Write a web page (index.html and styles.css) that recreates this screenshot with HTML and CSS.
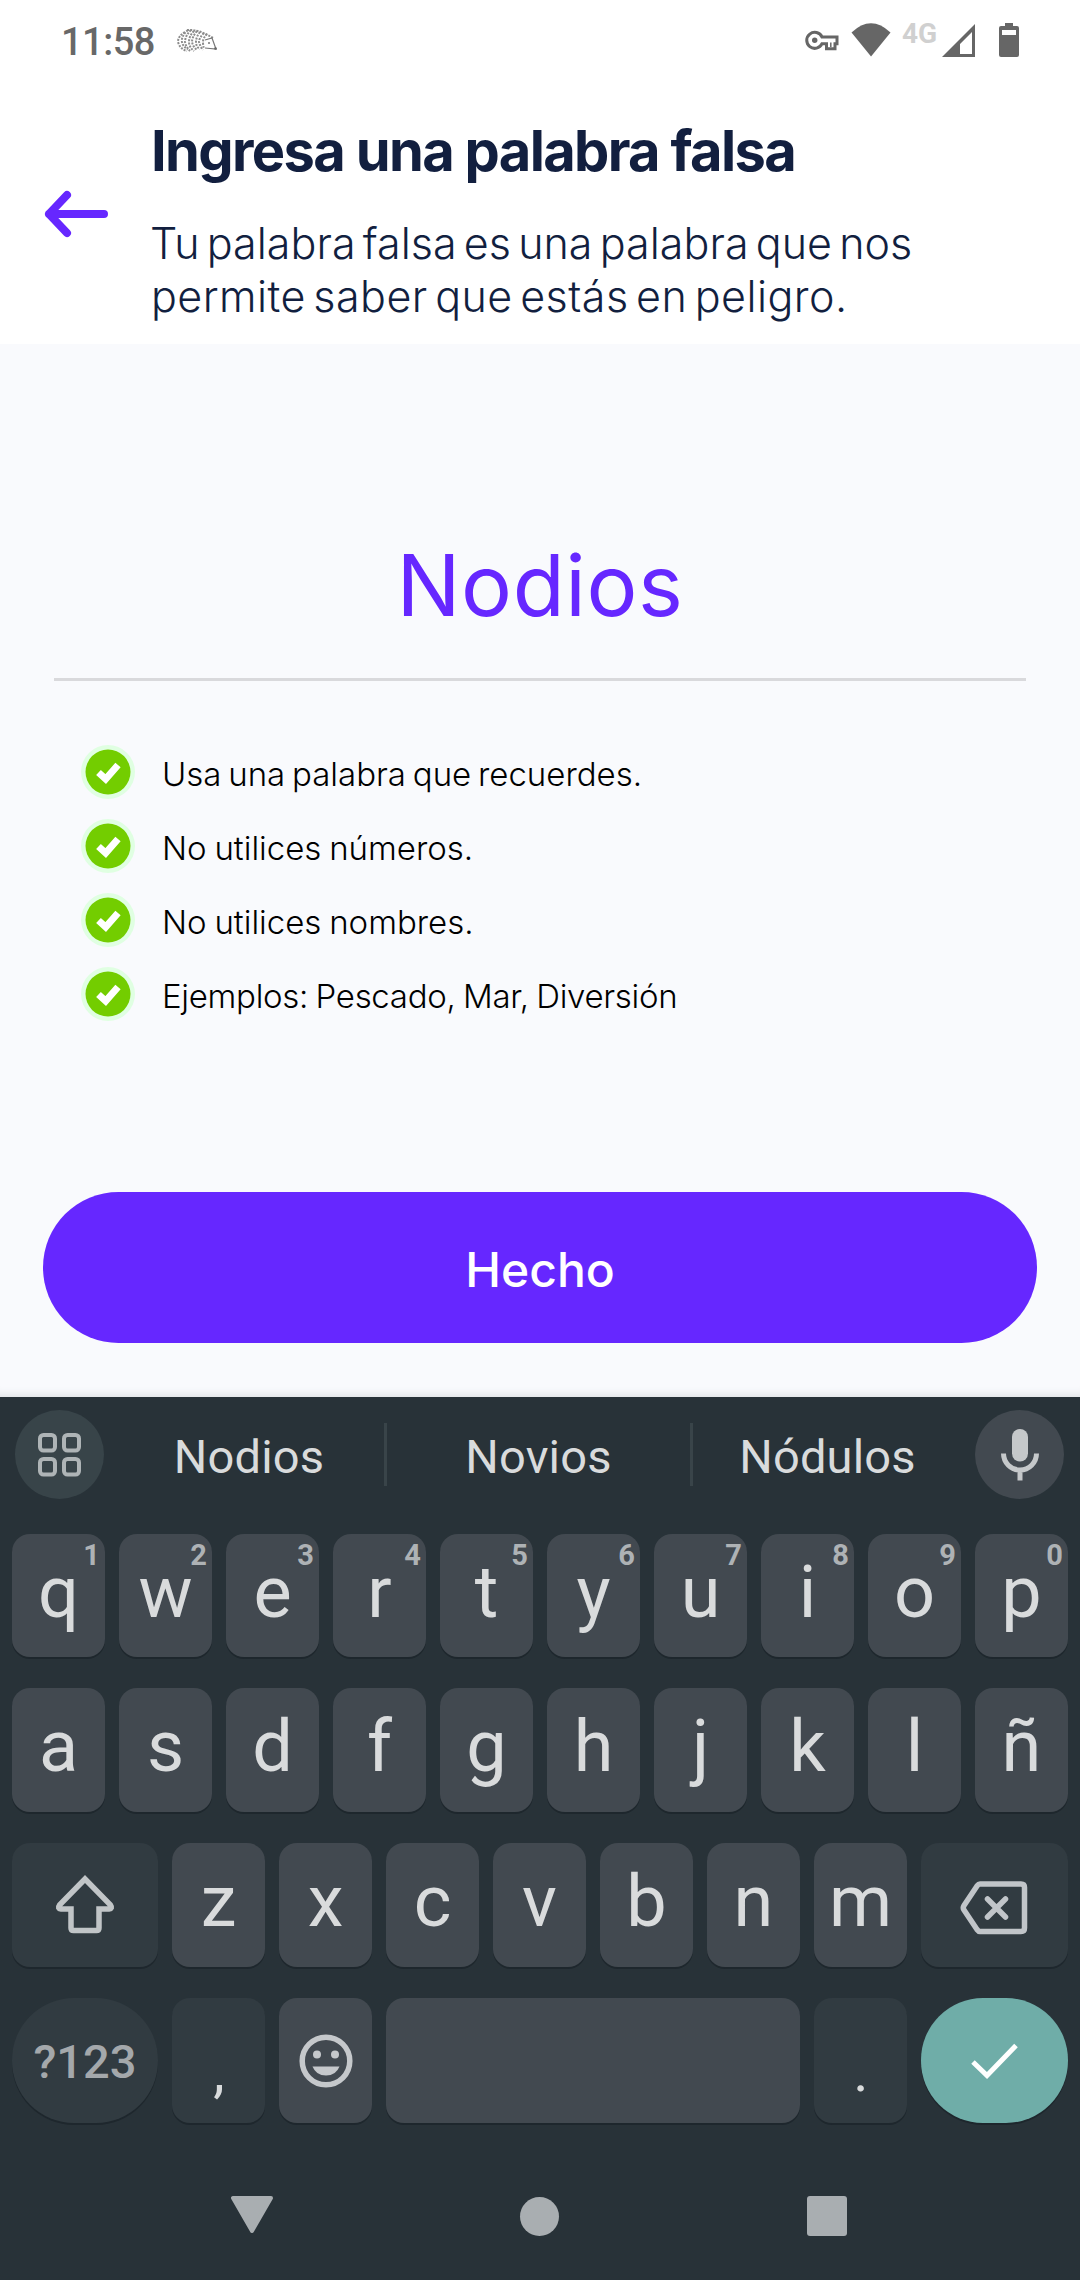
FILE: index.html
```html
<!DOCTYPE html>
<html lang="es">
<head>
<meta charset="utf-8">
<title>Ingresa una palabra falsa</title>
<link rel="stylesheet" href="styles.css">
</head>
<body>
<div class="screen">
  <div class="status">
    <span class="time">11:58</span>
    <svg class="hedgehog" width="40" height="24" viewBox="0 0 40 24">
      <g fill="none" stroke="#8c8c8c" stroke-width="2" stroke-dasharray="2 1.2">
        <path d="M8 3Q1 7 1 13Q3 20 10 22"/><path d="M11 1Q4 7 5 13Q6 18 11 20"/>
        <path d="M14 1Q8 7 8 13Q9 18 13 22"/><path d="M17 2Q12 7 12 13Q12 18 17 22"/>
        <path d="M20 2Q15 8 15 13Q16 18 20 21"/><path d="M23 3Q19 8 19 13Q19 18 23 20"/>
        <path d="M27 4Q22 9 22 13Q23 17 26 21"/><path d="M30 5Q26 9 26 13Q26 17 27 19"/>
        <path d="M10 1Q22 0 36 9"/>
      </g>
      <path d="M28 11L35 9L39 20L28 19" fill="none" stroke="#777" stroke-width="1.2"/>
      <circle cx="32" cy="14" r="1" fill="#777"/><circle cx="38.500" cy="19.500" r="1.300" fill="#666"/>
    </svg>
    <span class="spacer"></span>
    <svg class="key-icon" width="34" height="22" viewBox="0 0 34 22">
      <path d="M17 7H32V13.700H30V18.700H21.500V13.700H17A8 8 0 1 1 17 7Z" fill="none" stroke="#666" stroke-width="3"/>
      <path d="M25.800 12.500V17" stroke="#666" stroke-width="1.500"/>
      <circle cx="9.700" cy="10.300" r="2.700" fill="#666"/>
    </svg>
    <svg class="wifi" width="40" height="34" viewBox="0 0 40 34"><path d="M0.500 9.500Q20 -9 39.500 9.500L20 33.500Z" fill="#666"/></svg>
    <span class="net">4G</span>
    <svg class="signal" width="33" height="34" viewBox="0 0 33 34"><path fill="#666" fill-rule="evenodd" d="M33 0V33H0ZM30 8L18 20V30H30Z"/></svg>
    <svg class="battery" width="20" height="34" viewBox="0 0 20 34"><path fill="#666" fill-rule="evenodd" d="M6 0H14V3H18Q20 3 20 5V32Q20 34 18 34H2Q0 34 0 32V5Q0 3 2 3H6ZM3 7V12H17V7Z"/></svg>
  </div>

  <header class="header">
    <svg class="back" width="64" height="48" viewBox="0 0 64 48"><path d="M23 5L5 24L23 43M5 24H60" fill="none" stroke="#6627ff" stroke-width="8" stroke-linecap="round" stroke-linejoin="round"/></svg>
    <div class="heading">
      <h1>Ingresa una palabra falsa</h1>
      <p><span class="line-a">Tu palabra falsa es una palabra que nos</span><br><span class="line-b">permite saber que estás en peligro.</span></p>
    </div>
  </header>

  <main class="content">
    <div class="word">Nodios</div>
    <ul class="tips">
      <li><svg class="check" viewBox="0 0 54 54"><circle cx="27" cy="27" r="27" fill="#e0ffe2"/><circle cx="27" cy="27" r="22.500" fill="#73cd00"/><path d="M17.500 27.500L24.700 34L37 20" fill="none" stroke="#fff" stroke-width="7"/></svg><span class="t1">Usa una palabra que recuerdes.</span></li>
      <li><svg class="check" viewBox="0 0 54 54"><circle cx="27" cy="27" r="27" fill="#e0ffe2"/><circle cx="27" cy="27" r="22.500" fill="#73cd00"/><path d="M17.500 27.500L24.700 34L37 20" fill="none" stroke="#fff" stroke-width="7"/></svg><span class="t2">No utilices números.</span></li>
      <li><svg class="check" viewBox="0 0 54 54"><circle cx="27" cy="27" r="27" fill="#e0ffe2"/><circle cx="27" cy="27" r="22.500" fill="#73cd00"/><path d="M17.500 27.500L24.700 34L37 20" fill="none" stroke="#fff" stroke-width="7"/></svg><span class="t3">No utilices nombres.</span></li>
      <li><svg class="check" viewBox="0 0 54 54"><circle cx="27" cy="27" r="27" fill="#e0ffe2"/><circle cx="27" cy="27" r="22.500" fill="#73cd00"/><path d="M17.500 27.500L24.700 34L37 20" fill="none" stroke="#fff" stroke-width="7"/></svg><span class="t4">Ejemplos: Pescado, Mar, Diversión</span></li>
    </ul>
    <button class="done">Hecho</button>
  </main>

  <div class="keyboard">
    <div class="strip">
      <span class="round apps"><svg width="44" height="44" viewBox="0 0 44 44"><g fill="none" stroke="#aeb4b6" stroke-width="4"><rect x="2" y="2" width="15" height="15.500" rx="3.500"/><rect x="26" y="2" width="15" height="15.500" rx="3.500"/><rect x="2" y="26" width="15" height="15.500" rx="3.500"/><rect x="26" y="26" width="15" height="15.500" rx="3.500"/></g></svg></span>
      <span class="sug s1">Nodios</span><i class="bar"></i><span class="sug s2">Novios</span><i class="bar"></i><span class="sug s3">Nódulos</span>
      <span class="round mic"><svg width="38" height="52" viewBox="0 0 38 52"><rect x="11" y="0" width="16" height="32.500" rx="8" fill="#c5c8ca"/><path d="M2.500 24.500A16.500 16.500 0 0 0 35.500 24.500M19 41V51.500" fill="none" stroke="#c5c8ca" stroke-width="5"/></svg></span>
    </div>
    <div class="row r1">
      <span class="key">q<sup>1</sup></span><span class="key">w<sup>2</sup></span><span class="key">e<sup>3</sup></span><span class="key">r<sup>4</sup></span><span class="key">t<sup>5</sup></span><span class="key">y<sup>6</sup></span><span class="key">u<sup>7</sup></span><span class="key">i<sup>8</sup></span><span class="key">o<sup>9</sup></span><span class="key">p<sup>0</sup></span>
    </div>
    <div class="row r2">
      <span class="key">a</span><span class="key">s</span><span class="key">d</span><span class="key">f</span><span class="key">g</span><span class="key">h</span><span class="key">j</span><span class="key">k</span><span class="key">l</span><span class="key">ñ</span>
    </div>
    <div class="row r3">
      <span class="key dim wide"><svg width="60" height="60" viewBox="0 0 60 60"><path d="M30 4L55.500 30Q58 33.500 54 34H44V53Q44 55.500 41.500 55.500H18.500Q16 55.500 16 53V34H6Q2 33.500 4.500 30Z" fill="none" stroke="#c1c5c7" stroke-width="5.500"/></svg></span>
      <span class="key">z</span><span class="key">x</span><span class="key">c</span><span class="key">v</span><span class="key">b</span><span class="key">n</span><span class="key">m</span>
      <span class="key dim wide"><svg class="bksp" width="68" height="54" viewBox="0 0 68 54"><path d="M20 3H61Q64.500 3 64.500 6.500V47Q64.500 50.500 61 50.500H20Q18.500 50.500 17 48.500L4 29Q2.500 26.800 4 24.500L17 5Q18.500 3 20 3Z" fill="none" stroke="#c1c5c9" stroke-width="5.500"/><path d="M25.500 18L43.500 36M43.500 18L25.500 36" transform="translate(2 0)" stroke="#c1c5c9" stroke-width="5.500" stroke-linecap="round"/></svg></span>
    </div>
    <div class="row r4">
      <span class="key dim wide pill sym">?123</span>
      <span class="key dim punct">,</span>
      <span class="key emoji"><svg width="54" height="54" viewBox="0 0 54 54"><circle cx="27" cy="27" r="23.800" fill="none" stroke="#c5c8cb" stroke-width="5.500"/><circle cx="18" cy="20.500" r="4" fill="#c5c8cb"/><circle cx="36" cy="20.500" r="4" fill="#c5c8cb"/><path d="M13.500 32.500H40.500Q37 41.500 27 41.500Q17 41.500 13.500 32.500Z" fill="#c5c8cb"/></svg></span>
      <span class="key space"></span>
      <span class="key dim punct">.</span>
      <span class="key wide pill enter"><svg width="48" height="36" viewBox="0 0 48 36"><path d="M2 19L16 32.500L45 2.500" fill="none" stroke="#fff" stroke-width="5"/></svg></span>
    </div>
    <div class="nav">
      <svg width="46" height="42" viewBox="0 0 46 42"><path d="M4 3H42L23 36Z" fill="#a9aeb1" stroke="#a9aeb1" stroke-width="4" stroke-linejoin="round"/></svg>
      <i class="home"></i>
      <i class="recent"></i>
    </div>
  </div>
</div>
</body>
</html>
```
FILE: styles.css
```css
* { box-sizing: border-box; }
body { margin: 0; background: #fff; font-family: Inter, "Liberation Sans", sans-serif; }
.screen { width: 1080px; height: 2280px; display: flex; flex-direction: column; overflow: hidden; }
svg { display: block; flex: none; }

.status { height: 80px; display: flex; align-items: flex-start; padding: 0 61px; font-family: Roboto, sans-serif; color: #686868; }
.time { width: 116px; margin-top: 20px; font-size: 38px; line-height: 45px; font-weight: 500; letter-spacing: -0.5px; }
.hedgehog { margin-top: 29px; }
.spacer { flex: 1; }
.key-icon { margin: 30px 12px 0 0; }
.wifi { margin: 23px 11px 0 0; }
.net { margin-top: 17px; width: 40px; font-size: 28px; line-height: 33px; font-weight: 700; color: #d0d0d0; }
.signal { margin: 24px 24px 0 0; }
.battery { margin-top: 23px; }

.header { height: 264px; display: flex; color: #121f3f; }
.back { margin: 110px 43px 0 44px; }
.heading { flex: 1; white-space: nowrap; }
h1 { margin: 37px 0 0; font-size: 56px; line-height: 68px; font-weight: 700; letter-spacing: -1.65px; }
p { margin: 32px 0 0; font-size: 43px; line-height: 53px; font-weight: 320; }
.line-a { letter-spacing: 0.05px; word-spacing: -5px; margin-left: -1px; }
.line-b { letter-spacing: 0.45px; word-spacing: -5px; }

.content { height: 1053px; background: #f9fafd; display: flex; flex-direction: column; box-shadow: inset 0 -10px 8px -8px #dfe1e3; }
.word { margin: 181px 54px 0; height: 156px; padding-top: 9px; border-bottom: 3px solid #d9d9dc; text-align: center; font-size: 85px; line-height: 104px; font-weight: 370; letter-spacing: 0.6px; color: #6627ff; }
.tips { list-style: none; margin: 54px 0 0; padding: 0 81px; color: #000; font-size: 33px; font-weight: 300; }
.tips li { height: 74px; display: flex; align-items: center; gap: 27px; white-space: nowrap; }
.check { width: 54px; height: 54px; }
.tips span { padding-top: 4px; word-spacing: -1.5px; }
.tips .t1 { word-spacing: -2.5px; }
.tips .t4 { letter-spacing: -0.3px; }
.done { margin: 161px 43px 0; height: 151px; border: 0; border-radius: 76px; background: #6627ff; color: #fff; font: 500 48px/58px Inter, sans-serif; padding: 4px 0 0; }

.keyboard { height: 883px; background: #283238; font-family: Roboto, sans-serif; color: #d9dbdc; padding: 0 12px; }
.strip { height: 137px; padding: 13px 4px 0 3px; display: flex; align-items: flex-start; }
.round { width: 89px; height: 89px; border-radius: 50%; background: #384449; display: flex; align-items: center; justify-content: center; }
.mic { background: #424950; }
.sug { font-size: 47px; line-height: 56px; margin-top: 19px; text-align: center; white-space: nowrap; letter-spacing: 0.2px; }
.s1 { width: 280px; padding-left: 10px; }
.s2 { width: 303px; }
.s3 { width: 282px; padding-right: 13px; }
.bar { width: 3px; height: 63px; margin-top: 13px; background: #394449; }
.row { display: flex; gap: 14px; height: 155px; }
.r1 { height: 154px; }
.key { position: relative; width: 93px; flex: none; height: 124px; border-radius: 18px; background: #424950; box-shadow: 0 2px 0 #1e272d; font-size: 72px; line-height: 118px; text-align: center; }
.r1 .key { height: 123px; }
sup { position: absolute; right: 5px; top: 4px; font-size: 29px; line-height: 34px; font-weight: 700; color: #aeb2b5; }
.wide { width: 147px; display: flex; align-items: center; justify-content: center; }
.wide:first-child { width: 146px; }
.dim { background: #313b41; }
.pill { border-radius: 62px; }
.sym { font-size: 47px; font-weight: 500; color: #a4a8ab; padding-top: 2px; }
.punct { font-size: 58px; line-height: 147px; padding-left: 1px; }
.emoji { display: flex; align-items: center; justify-content: center; }
.space { width: 414px; }
.enter { background: #6fada8; }
.bksp { margin: 5px 2px 0 0; }
.r4 .key { height: 125px; }
.nav { display: flex; justify-content: space-between; align-items: center; padding: 0 221px 0 217px; margin-top: 42px; height: 42px; }
.home { width: 39px; height: 39px; margin: 0 2px 0 -2px; border-radius: 50%; background: #a9aeb1; }
.recent { width: 40px; height: 40px; border-radius: 3px; background: #a9aeb1; }
```
